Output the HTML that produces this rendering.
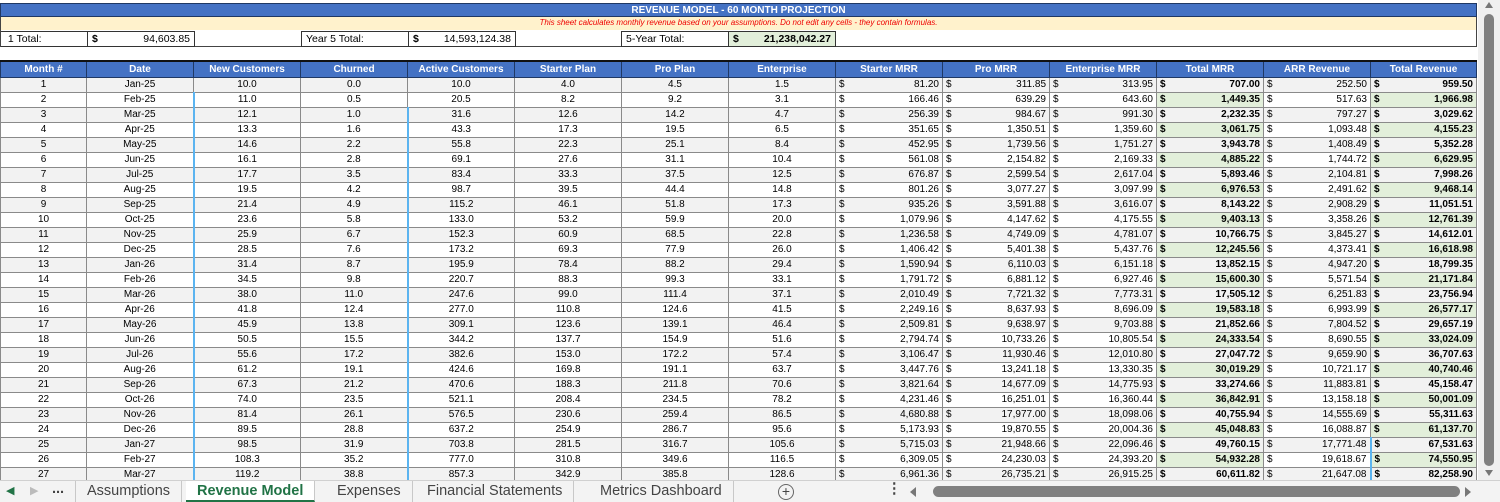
<!DOCTYPE html>
<html><head><meta charset="utf-8"><style>
*{margin:0;padding:0;box-sizing:border-box}
body{width:1500px;height:502px;overflow:hidden;background:#fff;font-family:"Liberation Sans Narrow","Liberation Sans",sans-serif;font-size:10px;color:#000;position:relative}
.abs{position:absolute}
#title{left:0;top:3px;width:1477px;height:14px;background:#4472c4;color:#fff;font-weight:bold;text-align:center;font-size:10px;line-height:14px;border:1px solid #1f3864}
#note{left:0;top:17px;width:1477px;height:13px;background:#fff2cc;color:#e00;font-style:italic;text-align:center;font-size:8px;line-height:12px;border-left:1px solid #444;border-right:1px solid #444}
#tot{left:0;top:30px;width:1477px;height:17px;border:1px solid #444;border-top:none;background:#fff}
.tc{position:absolute;top:1px;height:16px;border:1px solid #333;font-size:10.5px;line-height:14px;padding:0 4px}
.tc i{font-style:normal;float:left;font-weight:bold}
.tc b{float:right}
table{position:absolute;left:0;top:60px;border-collapse:collapse;table-layout:fixed;width:1476px}
td,th{height:15px;border:1px solid #8a8a8a;text-align:center;white-space:nowrap;overflow:hidden;padding:0 3px;line-height:13px}
th{background:#4472c4;color:#fff;font-weight:bold;height:16px;border-color:#1f3864;border-top:2px solid #111;font-size:10px}
tr:nth-child(even) td{background:#f2f2f2}
td.m{text-align:right}
td.m:before{content:"$";float:left}
td.b{font-weight:bold}
tr:nth-child(odd) td.b{background:#e2efda}
td.bl{border-left:2px solid #5bb4f0}
#tabs{left:0;top:480px;width:1500px;height:22px;background:#f3f3f3;border-top:1px solid #d0d0d0;font-family:"Liberation Sans",sans-serif;font-size:14.5px;color:#444}
.tab{position:absolute;top:0;height:21px;line-height:20px;padding:0 11px;border-right:1px solid #c8c8c8}
.act{background:#fff;color:#217346;font-weight:bold;border-bottom:2px solid #217346}
#vs{left:1478px;top:0;width:22px;height:480px;background:#f0f0f0}
</style></head><body>
<div class="abs" id="title">REVENUE MODEL - 60 MONTH PROJECTION</div>
<div class="abs" id="note">This sheet calculates monthly revenue based on your assumptions. Do not edit any cells - they contain formulas.</div>
<div class="abs" id="tot">
<div class="tc" style="left:0;width:87px;border-left:none">&nbsp;1 Total:</div>
<div class="tc" style="left:86px;width:108px"><i>$</i><b style="font-weight:normal">94,603.85</b></div>
<div class="tc" style="left:300px;width:108px">Year 5 Total:</div>
<div class="tc" style="left:407px;width:108px"><i>$</i><b style="font-weight:normal">14,593,124.38</b></div>
<div class="tc" style="left:620px;width:108px">5-Year Total:</div>
<div class="tc" style="left:727px;width:108px;background:#e2efda"><i>$</i><b>21,238,042.27</b></div>
</div>
<table>
<colgroup><col style="width:86px"><col span="12" style="width:107px"><col style="width:106px"></colgroup>
<tr><th>Month #</th><th>Date</th><th>New Customers</th><th>Churned</th><th>Active Customers</th><th>Starter Plan</th><th>Pro Plan</th><th>Enterprise</th><th>Starter MRR</th><th>Pro MRR</th><th>Enterprise MRR</th><th>Total MRR</th><th>ARR Revenue</th><th>Total Revenue</th></tr>
<tr><td>1</td><td>Jan-25</td><td>10.0</td><td>0.0</td><td>10.0</td><td>4.0</td><td>4.5</td><td>1.5</td><td class="m">81.20</td><td class="m">311.85</td><td class="m">313.95</td><td class="m b">707.00</td><td class="m">252.50</td><td class="m b">959.50</td></tr>
<tr><td>2</td><td>Feb-25</td><td class="bl">11.0</td><td>0.5</td><td>20.5</td><td>8.2</td><td>9.2</td><td>3.1</td><td class="m">166.46</td><td class="m">639.29</td><td class="m">643.60</td><td class="m b">1,449.35</td><td class="m">517.63</td><td class="m b">1,966.98</td></tr>
<tr><td>3</td><td>Mar-25</td><td class="bl">12.1</td><td>1.0</td><td class="bl">31.6</td><td>12.6</td><td>14.2</td><td>4.7</td><td class="m">256.39</td><td class="m">984.67</td><td class="m">991.30</td><td class="m b">2,232.35</td><td class="m">797.27</td><td class="m b">3,029.62</td></tr>
<tr><td>4</td><td>Apr-25</td><td class="bl">13.3</td><td>1.6</td><td class="bl">43.3</td><td>17.3</td><td>19.5</td><td>6.5</td><td class="m">351.65</td><td class="m">1,350.51</td><td class="m">1,359.60</td><td class="m b">3,061.75</td><td class="m">1,093.48</td><td class="m b">4,155.23</td></tr>
<tr><td>5</td><td>May-25</td><td class="bl">14.6</td><td>2.2</td><td class="bl">55.8</td><td>22.3</td><td>25.1</td><td>8.4</td><td class="m">452.95</td><td class="m">1,739.56</td><td class="m">1,751.27</td><td class="m b">3,943.78</td><td class="m">1,408.49</td><td class="m b">5,352.28</td></tr>
<tr><td>6</td><td>Jun-25</td><td class="bl">16.1</td><td>2.8</td><td class="bl">69.1</td><td>27.6</td><td>31.1</td><td>10.4</td><td class="m">561.08</td><td class="m">2,154.82</td><td class="m">2,169.33</td><td class="m b">4,885.22</td><td class="m">1,744.72</td><td class="m b">6,629.95</td></tr>
<tr><td>7</td><td>Jul-25</td><td class="bl">17.7</td><td>3.5</td><td class="bl">83.4</td><td>33.3</td><td>37.5</td><td>12.5</td><td class="m">676.87</td><td class="m">2,599.54</td><td class="m">2,617.04</td><td class="m b">5,893.46</td><td class="m">2,104.81</td><td class="m b">7,998.26</td></tr>
<tr><td>8</td><td>Aug-25</td><td class="bl">19.5</td><td>4.2</td><td class="bl">98.7</td><td>39.5</td><td>44.4</td><td>14.8</td><td class="m">801.26</td><td class="m">3,077.27</td><td class="m">3,097.99</td><td class="m b">6,976.53</td><td class="m">2,491.62</td><td class="m b">9,468.14</td></tr>
<tr><td>9</td><td>Sep-25</td><td class="bl">21.4</td><td>4.9</td><td class="bl">115.2</td><td>46.1</td><td>51.8</td><td>17.3</td><td class="m">935.26</td><td class="m">3,591.88</td><td class="m">3,616.07</td><td class="m b">8,143.22</td><td class="m">2,908.29</td><td class="m b">11,051.51</td></tr>
<tr><td>10</td><td>Oct-25</td><td class="bl">23.6</td><td>5.8</td><td class="bl">133.0</td><td>53.2</td><td>59.9</td><td>20.0</td><td class="m">1,079.96</td><td class="m">4,147.62</td><td class="m">4,175.55</td><td class="m b">9,403.13</td><td class="m">3,358.26</td><td class="m b">12,761.39</td></tr>
<tr><td>11</td><td>Nov-25</td><td class="bl">25.9</td><td>6.7</td><td class="bl">152.3</td><td>60.9</td><td>68.5</td><td>22.8</td><td class="m">1,236.58</td><td class="m">4,749.09</td><td class="m">4,781.07</td><td class="m b">10,766.75</td><td class="m">3,845.27</td><td class="m b">14,612.01</td></tr>
<tr><td>12</td><td>Dec-25</td><td class="bl">28.5</td><td>7.6</td><td class="bl">173.2</td><td>69.3</td><td>77.9</td><td>26.0</td><td class="m">1,406.42</td><td class="m">5,401.38</td><td class="m">5,437.76</td><td class="m b">12,245.56</td><td class="m">4,373.41</td><td class="m b">16,618.98</td></tr>
<tr><td>13</td><td>Jan-26</td><td class="bl">31.4</td><td>8.7</td><td class="bl">195.9</td><td>78.4</td><td>88.2</td><td>29.4</td><td class="m">1,590.94</td><td class="m">6,110.03</td><td class="m">6,151.18</td><td class="m b">13,852.15</td><td class="m">4,947.20</td><td class="m b">18,799.35</td></tr>
<tr><td>14</td><td>Feb-26</td><td class="bl">34.5</td><td>9.8</td><td class="bl">220.7</td><td>88.3</td><td>99.3</td><td>33.1</td><td class="m">1,791.72</td><td class="m">6,881.12</td><td class="m">6,927.46</td><td class="m b">15,600.30</td><td class="m">5,571.54</td><td class="m b">21,171.84</td></tr>
<tr><td>15</td><td>Mar-26</td><td class="bl">38.0</td><td>11.0</td><td class="bl">247.6</td><td>99.0</td><td>111.4</td><td>37.1</td><td class="m">2,010.49</td><td class="m">7,721.32</td><td class="m">7,773.31</td><td class="m b">17,505.12</td><td class="m">6,251.83</td><td class="m b">23,756.94</td></tr>
<tr><td>16</td><td>Apr-26</td><td class="bl">41.8</td><td>12.4</td><td class="bl">277.0</td><td>110.8</td><td>124.6</td><td>41.5</td><td class="m">2,249.16</td><td class="m">8,637.93</td><td class="m">8,696.09</td><td class="m b">19,583.18</td><td class="m">6,993.99</td><td class="m b">26,577.17</td></tr>
<tr><td>17</td><td>May-26</td><td class="bl">45.9</td><td>13.8</td><td class="bl">309.1</td><td>123.6</td><td>139.1</td><td>46.4</td><td class="m">2,509.81</td><td class="m">9,638.97</td><td class="m">9,703.88</td><td class="m b">21,852.66</td><td class="m">7,804.52</td><td class="m b">29,657.19</td></tr>
<tr><td>18</td><td>Jun-26</td><td class="bl">50.5</td><td>15.5</td><td class="bl">344.2</td><td>137.7</td><td>154.9</td><td>51.6</td><td class="m">2,794.74</td><td class="m">10,733.26</td><td class="m">10,805.54</td><td class="m b">24,333.54</td><td class="m">8,690.55</td><td class="m b">33,024.09</td></tr>
<tr><td>19</td><td>Jul-26</td><td class="bl">55.6</td><td>17.2</td><td class="bl">382.6</td><td>153.0</td><td>172.2</td><td>57.4</td><td class="m">3,106.47</td><td class="m">11,930.46</td><td class="m">12,010.80</td><td class="m b">27,047.72</td><td class="m">9,659.90</td><td class="m b">36,707.63</td></tr>
<tr><td>20</td><td>Aug-26</td><td class="bl">61.2</td><td>19.1</td><td class="bl">424.6</td><td>169.8</td><td>191.1</td><td>63.7</td><td class="m">3,447.76</td><td class="m">13,241.18</td><td class="m">13,330.35</td><td class="m b">30,019.29</td><td class="m">10,721.17</td><td class="m b">40,740.46</td></tr>
<tr><td>21</td><td>Sep-26</td><td class="bl">67.3</td><td>21.2</td><td class="bl">470.6</td><td>188.3</td><td>211.8</td><td>70.6</td><td class="m">3,821.64</td><td class="m">14,677.09</td><td class="m">14,775.93</td><td class="m b">33,274.66</td><td class="m">11,883.81</td><td class="m b">45,158.47</td></tr>
<tr><td>22</td><td>Oct-26</td><td class="bl">74.0</td><td>23.5</td><td class="bl">521.1</td><td>208.4</td><td>234.5</td><td>78.2</td><td class="m">4,231.46</td><td class="m">16,251.01</td><td class="m">16,360.44</td><td class="m b">36,842.91</td><td class="m">13,158.18</td><td class="m b">50,001.09</td></tr>
<tr><td>23</td><td>Nov-26</td><td class="bl">81.4</td><td>26.1</td><td class="bl">576.5</td><td>230.6</td><td>259.4</td><td>86.5</td><td class="m">4,680.88</td><td class="m">17,977.00</td><td class="m">18,098.06</td><td class="m b">40,755.94</td><td class="m">14,555.69</td><td class="m b">55,311.63</td></tr>
<tr><td>24</td><td>Dec-26</td><td class="bl">89.5</td><td>28.8</td><td class="bl">637.2</td><td>254.9</td><td>286.7</td><td>95.6</td><td class="m">5,173.93</td><td class="m">19,870.55</td><td class="m">20,004.36</td><td class="m b">45,048.83</td><td class="m">16,088.87</td><td class="m b">61,137.70</td></tr>
<tr><td>25</td><td>Jan-27</td><td class="bl">98.5</td><td>31.9</td><td class="bl">703.8</td><td>281.5</td><td>316.7</td><td>105.6</td><td class="m">5,715.03</td><td class="m">21,948.66</td><td class="m">22,096.46</td><td class="m b">49,760.15</td><td class="m">17,771.48</td><td class="m b bl">67,531.63</td></tr>
<tr><td>26</td><td>Feb-27</td><td class="bl">108.3</td><td>35.2</td><td class="bl">777.0</td><td>310.8</td><td>349.6</td><td>116.5</td><td class="m">6,309.05</td><td class="m">24,230.03</td><td class="m">24,393.20</td><td class="m b">54,932.28</td><td class="m">19,618.67</td><td class="m b bl">74,550.95</td></tr>
<tr><td>27</td><td>Mar-27</td><td class="bl">119.2</td><td>38.8</td><td class="bl">857.3</td><td>342.9</td><td>385.8</td><td>128.6</td><td class="m">6,961.36</td><td class="m">26,735.21</td><td class="m">26,915.25</td><td class="m b">60,611.82</td><td class="m">21,647.08</td><td class="m b bl">82,258.90</td></tr>
</table>
<div class="abs" id="vs">
<div class="abs" style="left:7px;top:2px;width:0;height:0;border-left:4px solid transparent;border-right:4px solid transparent;border-bottom:6px solid #777"></div>
<div class="abs" style="left:6px;top:14px;width:10px;height:452px;background:#808080;border-radius:5px"></div>
<div class="abs" style="left:7px;top:470px;width:0;height:0;border-left:4px solid transparent;border-right:4px solid transparent;border-top:6px solid #777"></div>
</div>
<div class="abs" id="tabs">
<span class="abs" style="left:6px;top:3px;color:#217346;font-size:11px">◀</span>
<span class="abs" style="left:30px;top:3px;color:#bbb;font-size:11px">▶</span>
<span class="abs" style="left:52px;top:0;font-weight:bold">...</span>
<div class="tab" style="left:75px;border-left:1px solid #c8c8c8">Assumptions</div>
<div class="tab act" style="left:186px">Revenue Model</div>
<div class="tab" style="left:326px">Expenses</div>
<div class="tab" style="left:416px">Financial Statements</div>
<div class="tab" style="left:589px">Metrics Dashboard</div>
<div class="abs" style="left:778px;top:3px;width:16px;height:16px;border:1px solid #666;border-radius:50%;text-align:center;line-height:13px;font-size:14px">+</div>
<span class="abs" style="left:887px;top:0;font-weight:bold">⋮</span>
<div class="abs" style="left:910px;top:6px;width:0;height:0;border-top:5px solid transparent;border-bottom:5px solid transparent;border-right:6px solid #777"></div>
<div class="abs" style="left:933px;top:5px;width:527px;height:11px;background:#808080;border-radius:6px"></div>
<div class="abs" style="left:1465px;top:6px;width:0;height:0;border-top:5px solid transparent;border-bottom:5px solid transparent;border-left:6px solid #777"></div>
</div>
</body></html>
